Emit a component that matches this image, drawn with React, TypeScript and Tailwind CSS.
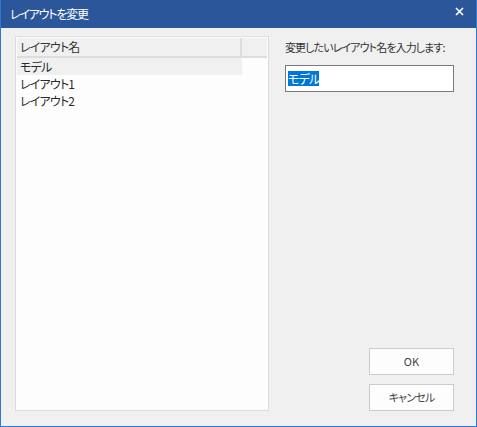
import React from "react";

export default function App() {
  const font = { fontFamily: '"Noto Sans CJK JP", "Noto Sans", sans-serif' };
  return (
    <div
      className="w-[477px] h-[427px] bg-[#f0f0f0] border-x border-b border-[#2b7bd6] flex flex-col text-[12px] text-[#2a2a2a] [font-feature-settings:'palt']"
      style={font}
    >
      <div className="h-[28px] bg-[#2b579a] flex items-center justify-between pl-[9px] pr-[12px] text-white shrink-0">
        <span className="text-[12px] leading-none tracking-[-1.2px]">レイアウトを変更</span>
        <svg width="9" height="9" viewBox="0 0 9 9" className="mt-[-6px]">
          <path d="M1 1 L8 8 M8 1 L1 8" stroke="white" strokeWidth="1.6" />
        </svg>
      </div>
      <div className="flex flex-1 pl-[14px] pt-[8px] pb-[15px]">
        <div className="w-[254px] shrink-0 h-[375px] border border-[#dcdcdc] bg-[#fdfdfd] p-[1px] flex flex-col tracking-[-0.8px]">
          <div className="flex h-[20px] bg-[#f0f0f0] border-b-2 border-[#dddddd]">
            <div className="w-[225px] border-r-2 border-[#dddddd] pl-[3px] flex items-center text-[#333]">
              レイアウト名
            </div>
            <div className="flex-1" />
          </div>
          <div className="flex flex-col">
            <div className="w-[225px] h-[17px] bg-[#f0f0f0] pl-[3px] flex items-center">モデル</div>
            <div className="h-[17px] pl-[3px] flex items-center">レイアウト1</div>
            <div className="h-[17px] pl-[3px] flex items-center">レイアウト2</div>
          </div>
        </div>
        <div className="w-[169px] shrink-0 ml-[16px] flex flex-col">
          <div className="mt-[3px] h-[16px] flex items-center text-[11px] tracking-[-0.9px] text-[#333] whitespace-nowrap">
            変更したいレイアウト名を入力します:
          </div>
          <div className="mt-[10px] h-[27px] w-[169px] border border-[#7a7a7a] bg-white flex items-center pl-[2px]">
            <span className="bg-[#0078d7] text-white leading-[15px] tracking-[-0.8px]">モデル</span>
          </div>
          <div className="flex-1" />
          <div className="flex flex-col items-end gap-[9px]">
            <button className="w-[85px] h-[27px] border border-[#cccccc] bg-[#fdfdfd] text-[11px] text-[#444]">
              OK
            </button>
            <button className="w-[85px] h-[27px] border border-[#cccccc] bg-[#fdfdfd] text-[11px] text-[#444] tracking-[-0.8px]">
              キャンセル
            </button>
          </div>
        </div>
      </div>
    </div>
  );
}
